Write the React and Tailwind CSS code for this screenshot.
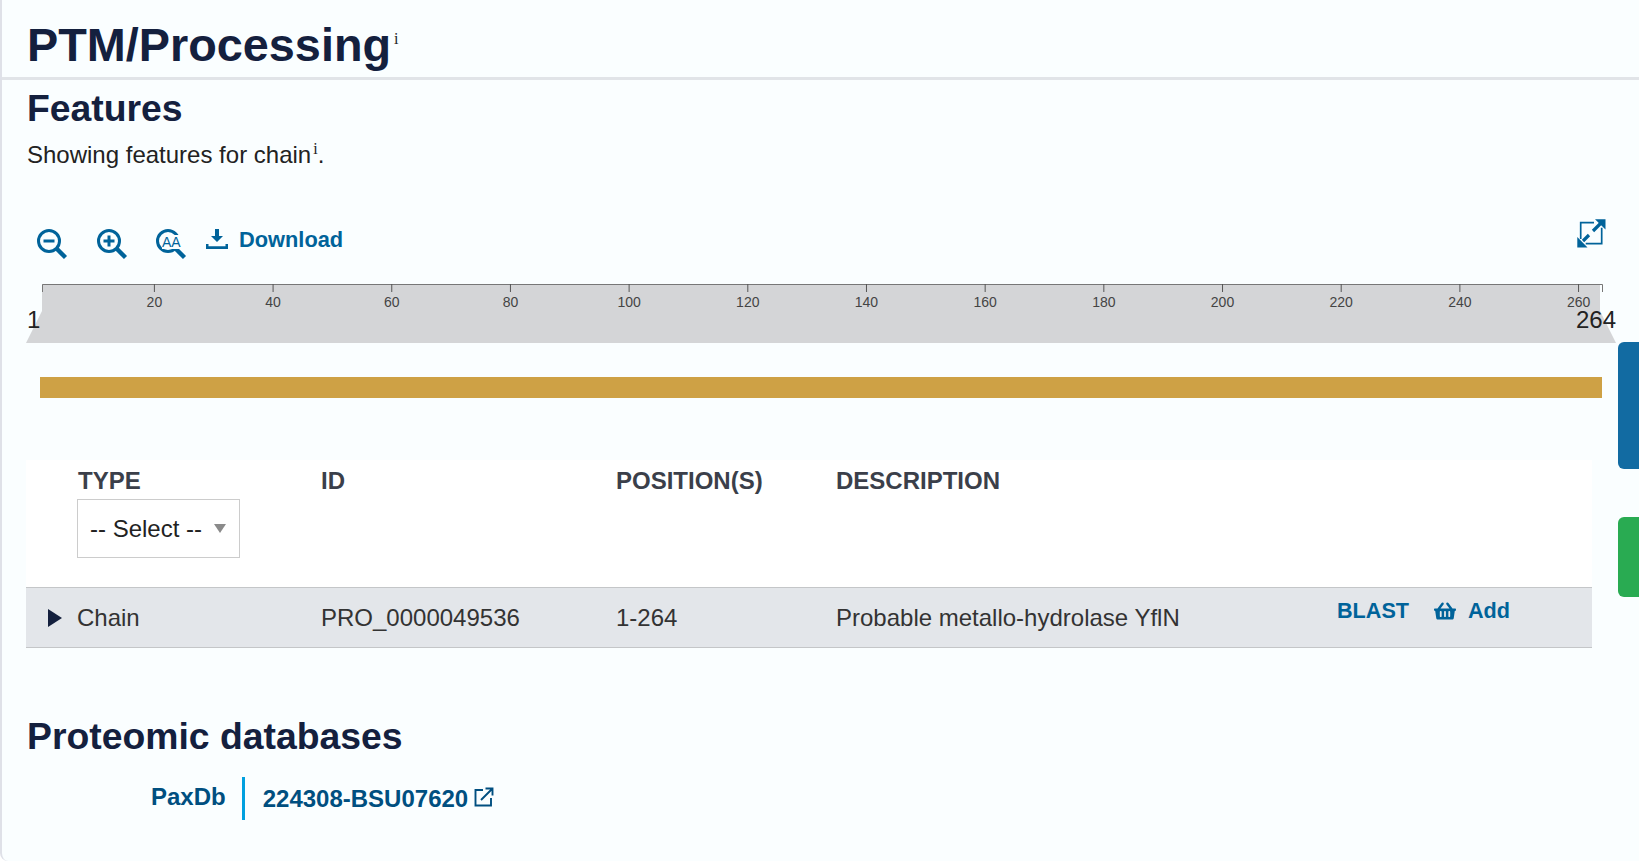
import React from "react";
import { FaShoppingBasket } from "react-icons/fa";

const ticks = [20, 40, 60, 80, 100, 120, 140, 160, 180, 200, 220, 240, 260];
const tickX = (n) => 154.4 + (n - 20) * 5.934;

const Info = ({ className }) => (
  <sup className={"[font-family:'Liberation_Serif',serif] text-[16px] font-normal text-[#222] leading-none " + className}>i</sup>
);

// magnifier used by the three zoom buttons
const Lens = ({ children }) => (
  <svg width="32" height="32" viewBox="0 0 32 32" fill="none" stroke="#00639a">
    <circle cx="13" cy="13" r="10.5" strokeWidth="3" />
    <path d="M21 21l8.5 8.5" strokeWidth="4.4" />
    {children}
  </svg>
);

const Ruler = () => (
  <svg width="1600" height="130" viewBox="24 270 1600 130" className="block -ml-[2px]">
    <polygon points="42,284 1600,284 1600,311 1616,343 26,343 42,311" fill="#d4d5d7" />
    <path d="M42.5 292V284.5H1602.5V292" fill="none" stroke="#777" strokeWidth="1" />
    {ticks.map((n) => (
      <g key={n}>
        <line x1={tickX(n)} x2={tickX(n)} y1="284" y2="292" stroke="#555" strokeWidth="1" />
        <text x={tickX(n)} y="307" textAnchor="middle" fontSize="14" fill="#444" fontFamily="Liberation Sans">{n}</text>
      </g>
    ))}
    <text x="27" y="328" fontSize="24" fill="#222" fontFamily="Liberation Sans">1</text>
    <text x="1576" y="328" fontSize="24" fill="#222" fontFamily="Liberation Sans">264</text>
    <rect x="40" y="377" width="1562" height="21" fill="#cea145" />
  </svg>
);

export default function App() {
  return (
    <div className="relative w-[1639px] h-[861px] overflow-hidden bg-[#fafeff] border-l-2 border-[#dfe1e8] rounded-bl-lg [font-family:'Liberation_Sans',sans-serif] text-[24px] text-[#222]">
      <header className="h-[80px] border-b-[3px] border-[#e1e4e8] pl-[25px] pt-[16px]">
        <h1 className="text-[46.8px] leading-[58px] font-bold text-[#14203e]">PTM/Processing<Info className="ml-[3px] align-[9px]" /></h1>
      </header>

      <section className="pl-[24px] pt-[4px]">
        <h2 className="ml-[1px] text-[37.33px] leading-[48px] font-bold text-[#14203e]">Features</h2>
        <p className="ml-[1px] mt-[7px] leading-[32px]">Showing features for chain<Info className="ml-[2px] align-[1px]" />.</p>

        <div className="flex items-center mt-[47px] mb-[4px] pl-[10px] pr-[33px] h-[48px]">
          <div className="flex mt-[4px]">
            <Lens><path d="M7.5 13h11" strokeWidth="3" /></Lens>
            <div className="ml-[28px]">
              <Lens><path d="M7.5 13h11M13 7.5v11" strokeWidth="3" /></Lens>
            </div>
            <div className="ml-[27px] relative">
              <Lens />
              <span className="absolute left-[7px] top-[7px] text-[14px] leading-[14px] text-[#00639a] bg-[#fafeff]">AA</span>
            </div>
          </div>
          <button className="flex items-center ml-[19px] -mt-[4px] font-bold text-[#00639a] text-[21.8px]">
            <svg width="22" height="20" viewBox="0 0 22 20" fill="#00639a" className="mr-[11px] -mt-[2px]">
              <path d="M9 0h4v7h4l-6 6-6-6h4zM0 15h2.5v2.2h17V15H22v5H0z" />
            </svg>
            Download
          </button>
          <svg width="29" height="29" viewBox="0 0 29 29" fill="none" className="ml-auto -mt-[18px]">
            <path d="M17 3.7H3.7V20M24.7 8.7V24.7H8.7" stroke="#00639a" strokeWidth="1.7" />
            <path d="M6 22l6-6M16 12l8-8" stroke="#00639a" strokeWidth="3.2" />
            <path d="M28.5 .3V10.5L18 .3zM.3 28.5V18l10.2 10.5z" fill="#00639a" />
          </svg>
        </div>

        <Ruler />

        <div className="mt-[60px] w-[1566px] text-[#333]">
          <div className="grid grid-cols-[52px_243px_295px_220px_501px_1fr] bg-white h-[127px] pt-[9px]">
            <div />
            <div>
              <div className="font-bold text-[#3b3f4a] leading-[24px]">TYPE</div>
              <div className="mt-[6px] -ml-[1px] w-[163px] h-[59px] flex items-center justify-between bg-white border border-[#ccc] pl-[12px] pr-[13px] text-[#222]">
                <span>-- Select --</span>
                <span className="w-0 h-0 border-x-[6.5px] border-x-transparent border-t-[9px] border-t-[#8a8a8a]" />
              </div>
            </div>
            <div className="font-bold text-[#3b3f4a] leading-[24px]">ID</div>
            <div className="font-bold text-[#3b3f4a] leading-[24px]">POSITION(S)</div>
            <div className="font-bold text-[#3b3f4a] leading-[24px]">DESCRIPTION</div>
            <div />
          </div>
          <div className="grid grid-cols-[52px_243px_295px_220px_501px_1fr] bg-[#e3e6ea] h-[61px] border-y border-[#c4c6c8] items-center">
            <div className="pl-[22px]">
              <span className="block w-0 h-0 border-y-[9px] border-y-transparent border-l-[14px] border-l-[#14203e]" />
            </div>
            <div className="-ml-[1px]">Chain</div>
            <div>PRO_0000049536</div>
            <div>1-264</div>
            <div>Probable metallo-hydrolase YflN</div>
            <div className="flex items-center -mt-[12px] font-bold text-[#00639a] text-[21.6px]">
              <span>BLAST</span>
              <FaShoppingBasket className="ml-[25px] mr-[12px] text-[22px]" />
              <span>Add</span>
            </div>
          </div>
        </div>

        <h2 className="ml-[1px] mt-[64px] text-[37.33px] leading-[48px] font-bold text-[#14203e]">Proteomic databases</h2>
        <div className="flex mt-[17px] pl-[125px] font-bold text-[#004f80]">
          <div className="h-[43px] pr-[16px] border-r-[3px] border-[#00a0df] leading-[39px]">PaxDb</div>
          <div className="pl-[18px] flex items-center h-[43px]">
            224308-BSU07620
            <svg width="20" height="20" viewBox="0 0 20 20" fill="none" stroke="#004f80" strokeWidth="1.9" className="ml-[6px] -mt-[3px]">
              <path d="M9 3H1.5v15.5H17V11M7 13L18 2M11.5 1.5H18.5V8.5" />
            </svg>
          </div>
        </div>
      </section>

      {/* side tabs sit on top of the page */}
      <div className="absolute right-0 top-[342px] w-[21px] h-[127px] bg-[#126ba2] rounded-l-[6px]" />
      <div className="absolute right-0 top-[517px] w-[21px] h-[80px] bg-[#29ab52] rounded-l-[6px]" />
    </div>
  );
}
